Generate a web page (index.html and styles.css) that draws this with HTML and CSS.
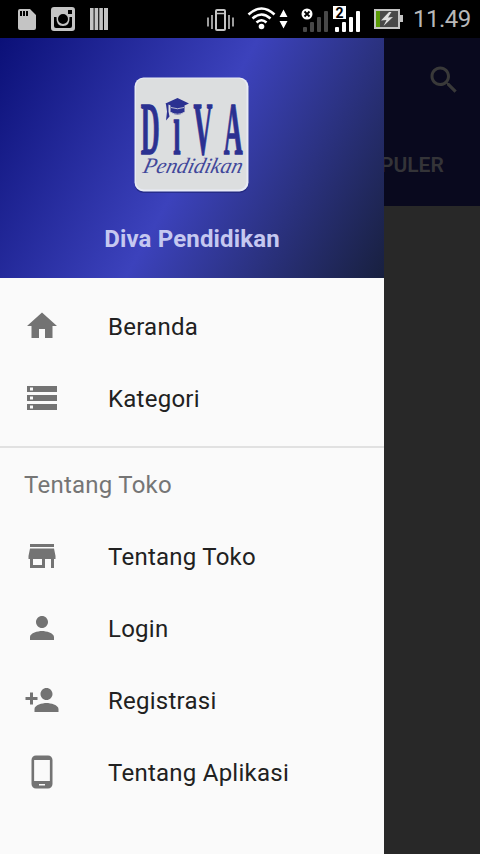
FILE: index.html
```
<!DOCTYPE html>
<html lang="id">
<head>
<meta charset="utf-8">
<title>Diva Pendidikan</title>
<link rel="stylesheet" href="styles.css">
</head>
<body>
<header class="status">
  <svg class="status-icons" width="408" height="38" viewBox="0 0 408 38">
    <g fill="#c4c4c4">
      <path fill-rule="evenodd" d="M20 9h10l6 6v13q0 2-2 2H20q-2 0-2-2V11q0-2 2-2zm0 2v5h2v-5zm3 0v5h2v-5zm3 0v5h2v-5z"/>
      <path fill-rule="evenodd" d="M54 7h18q3 0 3 3v18q0 3-3 3H54q-3 0-3-3V10q0-3 3-3zm14 3v4h4v-4zM54 17v9q0 2 2 2h14q2 0 2-2v-9h-2.500q.5 9-6.500 9t-6.500-9zm9-3a5 5 0 1 0 0 10a5 5 0 0 0 0-10z"/>
      <path d="M90 8h3.600v22H90zM94.600 8h3.600v22h-3.600zM99.300 8h3.600v22h-3.600zM104 8h4v22h-4z"/>
    </g>
    <g fill="none" stroke="#c4c4c4">
      <rect x="216" y="10" width="9" height="20" rx="1" stroke-width="2"/>
      <path stroke-width="1.600" d="M216 13.500h9M212 15v14M229 15v14M208 17.500v9M233 17.500v9"/>
    </g>
    <g fill="none" stroke="#fff" stroke-width="2.600">
      <path d="M248.500 14.500q13-12 26 0M252.500 18.500q9-8 18 0M256.500 22.500q5-4.500 10 0"/>
    </g>
    <g fill="#fff">
      <circle cx="261.500" cy="26.500" r="2.800"/>
      <path d="M279.500 17l4-7.500 4 7.500zM279.500 21l4 7.500 4-7.500z"/>
      <circle cx="307" cy="14" r="5.500"/>
      <rect x="333" y="6" width="13" height="13"/>
      <rect x="335" y="27" width="4" height="5" rx="1"/>
      <rect x="342" y="22" width="4" height="10" rx="1"/>
      <rect x="349" y="17" width="4" height="15" rx="1"/>
      <rect x="356" y="11" width="4" height="21" rx="1"/>
    </g>
    <path d="M304.500 11.500l5 5m0-5l-5 5" stroke="#000" stroke-width="1.800"/>
    <g fill="#484848">
      <rect x="303" y="27" width="4" height="5" rx="1"/>
      <rect x="310" y="22" width="4" height="10" rx="1"/>
      <rect x="317" y="17" width="4" height="15" rx="1"/>
      <rect x="324" y="11" width="4" height="21" rx="1"/>
    </g>
    <text class="sim" x="339.500" y="17.500" text-anchor="middle">2</text>
    <rect x="375" y="10" width="24" height="18" fill="#484848" stroke="#c4c4c4" stroke-width="2"/>
    <rect x="376" y="11" width="4" height="16" fill="#5b9b08"/>
    <path d="M400 15h3v7h-3z" fill="#c4c4c4"/>
    <path d="M389 12l-8 8.500 5.500-.5-3 6 9.500-9-5 .5 3.500-5.500z" fill="#ddd"/>
  </svg>
  <span class="clock">11.49</span>
</header>
<main class="screen">
  <aside class="drawer">
    <div class="profile">
      <svg class="logo" width="120" height="120" viewBox="0 0 120 120">
        <rect x="2.500" y="4" width="114" height="114" rx="9" fill="#1b2170" opacity=".6"/>
        <rect x="2.500" y="2.500" width="114" height="114" rx="9" fill="#e8ebf5"/>
        <rect x="4" y="3.500" width="110.500" height="111" rx="8" fill="#dcdedf"/>
        <text class="brand" transform="translate(0 78.500) scale(.35 1)" y="0"><tspan x="25">D</tspan><tspan x="118">i</tspan><tspan x="176">V</tspan><tspan x="262">A</tspan></text>
        <path d="M33.500 28.500l12-5.500 11.500 5.500-4.500 2v6.500q-7 6-14 0v-6.500l-2-1v7l1 5-3.500 4 1-9-1-7z" fill="#2b3191"/>
        <path d="M39 32.500q6.500 2.500 13 0M39 37.500q6.500 3.500 13 0" fill="none" stroke="#dcdedf" stroke-width=".8"/>
        <text class="script" transform="translate(10 97.500) skewX(-14)" x="0" y="0" textLength="99" lengthAdjust="spacingAndGlyphs">Pendidikan</text>
      </svg>
      <h1 class="name">Diva Pendidikan</h1>
    </div>
    <nav class="menu">
      <a class="item"><svg class="icon" viewBox="0 0 24 24"><path d="M10 20v-6h4v6h5v-8h3L12 3 2 12h3v8z"/></svg><span>Beranda</span></a>
      <a class="item"><svg class="icon" viewBox="0 0 24 24"><path d="M2 20h20v-4H2v4zm2-3h2v2H4v-2zM2 4v4h20V4H2zm4 3H4V5h2v2zm-4 7h20v-4H2v4zm2-3h2v2H4v-2z"/></svg><span>Kategori</span></a>
    </nav>
    <nav class="menu about">
      <h2 class="heading">Tentang Toko</h2>
      <a class="item"><svg class="icon" viewBox="0 0 24 24"><path d="M20 4H4v2h16V4zm1 10v-2l-1-5H4l-1 5v2h1v6h10v-6h4v6h2v-6h1zm-9 4H6v-4h6v4z"/></svg><span>Tentang Toko</span></a>
      <a class="item"><svg class="icon" viewBox="0 0 24 24"><path d="M12 12c2.210 0 4-1.790 4-4s-1.790-4-4-4-4 1.790-4 4 1.790 4 4 4zm0 2c-2.670 0-8 1.340-8 4v2h16v-2c0-2.660-5.330-4-8-4z"/></svg><span>Login</span></a>
      <a class="item"><svg class="icon" viewBox="0 0 24 24"><path d="M15 12c2.210 0 4-1.790 4-4s-1.790-4-4-4-4 1.790-4 4 1.790 4 4 4zm-9-2V7H4v3H1v2h3v3h2v-3h3v-2H6zm9 4c-2.670 0-8 1.340-8 4v2h16v-2c0-2.660-5.330-4-8-4z"/></svg><span>Registrasi</span></a>
      <a class="item"><svg class="icon" viewBox="0 0 24 24"><path d="M16 1H8C6.340 1 5 2.340 5 4v16c0 1.660 1.340 3 3 3h8c1.660 0 3-1.340 3-3V4c0-1.660-1.340-3-3-3zm-2 20h-4v-1h4v1zm3.250-3H6.750V4h10.500v14z"/></svg><span>Tentang Aplikasi</span></a>
    </nav>
  </aside>
  <section class="page">
    <div class="appbar">
      <svg class="search" viewBox="0 0 24 24"><path d="M15.500 14h-.79l-.28-.27C15.410 12.590 16 11.110 16 9.500 16 5.910 13.090 3 9.500 3S3 5.910 3 9.500 5.910 16 9.500 16c1.610 0 3.090-.59 4.230-1.570l.27.28v.79l5 4.990L20.490 19l-4.990-5zm-6 0C7.010 14 5 11.990 5 9.500S7.010 5 9.500 5 14 7.010 14 9.500 11.990 14 9.500 14z"/></svg>
      <div class="tab">PULER</div>
    </div>
  </section>
</main>
</body>
</html>
```

FILE: styles.css
```
* { box-sizing: border-box; }
body {
  margin: 0;
  width: 480px;
  height: 854px;
  overflow: hidden;
  display: flex;
  flex-direction: column;
  background: #282828;
  font-family: Roboto, "Liberation Sans", sans-serif;
}
.status {
  height: 38px;
  display: flex;
  flex: none;
  background: #000;
}
.status-icons { flex: none; }
.sim { font: bold 14px Roboto, sans-serif; fill: #000; }
.clock {
  padding-left: 5px;
  color: #b8b8b8;
  font-size: 24px;
  letter-spacing: -.5px;
  line-height: 39px;
  white-space: nowrap;
}
.screen { display: flex; flex: 1; }
.drawer { width: 384px; flex: none; background: #fafafa; }
.profile {
  height: 240px;
  padding-top: 37px;
  display: flex;
  flex-direction: column;
  align-items: center;
  background: linear-gradient(119deg, #0b1078, #3c42bc 50%, #18203f);
}
.logo { flex: none; }
.brand {
  font: bold 75px "Liberation Serif", serif;
  fill: #2b3191;
  stroke: #2b3191;
  stroke-width: 1px;
  vector-effect: non-scaling-stroke;
}
.brand tspan { vector-effect: non-scaling-stroke; }
.script {
  font: italic 22px "Liberation Serif", serif;
  fill: #41479a;
}
.name {
  margin: 28px 0 0;
  color: #c5c8f0;
  font-size: 24px;
  font-weight: 700;
  line-height: 32px;
  letter-spacing: .15px;
}
.menu { padding: 12px 0; }
.about { border-top: 2px solid #e1e1e1; padding: 0; }
.heading {
  margin: 0;
  height: 72px;
  padding-left: 24px;
  color: #757575;
  font-size: 24px;
  font-weight: 400;
  line-height: 74px;
  letter-spacing: .25px;
}
.item {
  height: 72px;
  padding: 0 24px;
  display: flex;
  align-items: center;
  gap: 48px;
  color: #212121;
  font-size: 24px;
  letter-spacing: .25px;
}
.item span { padding-top: 2px; }
.icon { width: 36px; height: 36px; fill: #737373; }
.page { flex: 1; min-width: 0; }
.appbar {
  height: 168px;
  padding-top: 24px;
  display: flex;
  flex-direction: column;
  background: #09091e;
  overflow: hidden;
}
.search {
  width: 36px;
  height: 36px;
  margin-left: 42px;
  flex: none;
  fill: #393939;
}
.tab {
  margin: 53px 0 0 -4px;
  color: #343438;
  font-size: 21px;
  font-weight: 600;
  line-height: 28px;
}
```
